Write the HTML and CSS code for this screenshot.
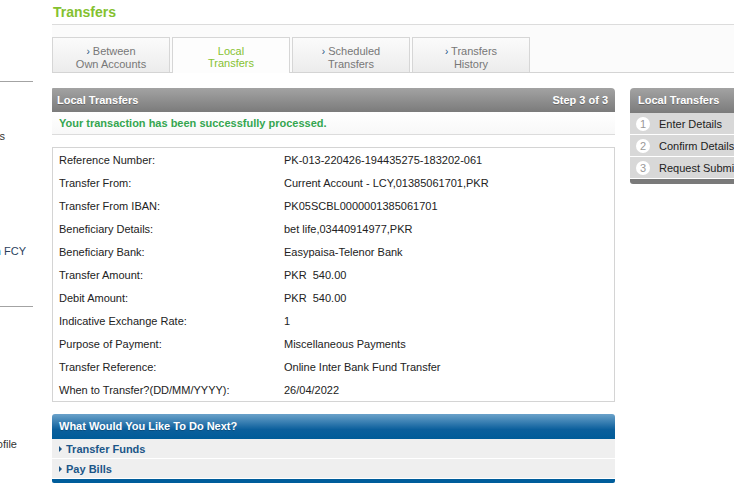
FILE: index.html
```html
<!DOCTYPE html>
<html lang="en">
<head>
<meta charset="utf-8">
<title>Transfers</title>
<link rel="stylesheet" href="styles.css">
</head>
<body>
<div class="page">
  <aside class="sidenav">
    <div class="side-rule rule-a"></div>
    <div class="side-item item-a"><span>My Beneficiaries</span></div>
    <div class="side-item item-b link"><span>Transfer in FCY</span></div>
    <div class="side-rule rule-b"></div>
    <div class="side-item item-c"><span>Update Profile</span></div>
  </aside>

  <main class="main">
    <header class="page-head"><h1>Transfers</h1></header>

    <nav class="tabs">
      <div class="tab"><span class="chev">›</span> Between<br>Own Accounts</div>
      <div class="tab active">Local<br>Transfers</div>
      <div class="tab"><span class="chev">›</span> Scheduled<br>Transfers</div>
      <div class="tab"><span class="chev">›</span> Transfers<br>History</div>
    </nav>

    <div class="content">
      <section class="col">
        <div class="panel-head">
          <span>Local Transfers</span>
          <span>Step 3 of 3</span>
        </div>
        <div class="success">Your transaction has been successfully processed.</div>

        <div class="details">
          <div class="row"><span class="lbl">Reference Number:</span><span class="val">PK-013-220426-194435275-183202-061</span></div>
          <div class="row"><span class="lbl">Transfer From:</span><span class="val">Current Account - LCY,01385061701,PKR</span></div>
          <div class="row"><span class="lbl">Transfer From IBAN:</span><span class="val">PK05SCBL0000001385061701</span></div>
          <div class="row"><span class="lbl">Beneficiary Details:</span><span class="val">bet life,03440914977,PKR</span></div>
          <div class="row"><span class="lbl">Beneficiary Bank:</span><span class="val">Easypaisa-Telenor Bank</span></div>
          <div class="row"><span class="lbl">Transfer Amount:</span><span class="val">PKR&nbsp;&nbsp;540.00</span></div>
          <div class="row"><span class="lbl">Debit Amount:</span><span class="val">PKR&nbsp;&nbsp;540.00</span></div>
          <div class="row"><span class="lbl">Indicative Exchange Rate:</span><span class="val">1</span></div>
          <div class="row"><span class="lbl">Purpose of Payment:</span><span class="val">Miscellaneous Payments</span></div>
          <div class="row"><span class="lbl">Transfer Reference:</span><span class="val">Online Inter Bank Fund Transfer</span></div>
          <div class="row"><span class="lbl">When to Transfer?(DD/MM/YYYY):</span><span class="val">26/04/2022</span></div>
        </div>

        <div class="next">
          <div class="next-head">What Would You Like To Do Next?</div>
          <div class="next-item"><span class="tri"></span>Transfer Funds</div>
          <div class="next-item"><span class="tri"></span>Pay Bills</div>
          <div class="next-foot"></div>
        </div>
      </section>

      <aside class="steps">
        <div class="steps-head">Local Transfers</div>
        <div class="step"><span class="num">1</span>Enter Details</div>
        <div class="step"><span class="num">2</span>Confirm Details</div>
        <div class="step"><span class="num">3</span>Request Submitted</div>
        <div class="steps-foot"></div>
      </aside>
    </div>
  </main>
</div>
</body>
</html>
```
FILE: styles.css
```css
html, body {
  margin: 0;
  padding: 0;
  background: #fff;
  overflow: hidden;
}
body {
  font-family: "Liberation Sans", Arial, sans-serif;
  font-size: 11px;
  color: #222;
  width: 734px;
  height: 495px;
}
.page {
  display: flex;
  align-items: flex-start;
  width: 734px;
}

/* left nav (clipped, as in the reference) */
.sidenav {
  width: 33px;
  flex-shrink: 0;
  margin-right: 19px;
  overflow: hidden;
  display: flex;
  flex-direction: column;
  padding-top: 81px;
}
.side-rule {
  height: 1px;
  background: #a3a3a3;
}
.side-item {
  display: flex;
  justify-content: flex-end;
  white-space: nowrap;
  line-height: 14px;
  height: 14px;
  color: #333;
}
.side-item.link { color: #2b3f5c; }
.item-a { margin-top: 47px; padding-right: 28px; }
.item-b { margin-top: 101px; padding-right: 7px; }
.rule-b { margin-top: 48px; }
.item-c { margin-top: 130px; padding-right: 16px; }

/* main */
.main {
  flex: 1;
  min-width: 0;
}
.page-head {
  border-bottom: 1px solid #dcdcdc;
  padding: 5px 0 4px 1px;
}
.page-head h1 {
  margin: 0;
  font-size: 14px;
  line-height: 15px;
  font-weight: bold;
  color: #84c12f;
}

.tabs {
  display: flex;
  gap: 2px;
  padding-top: 12px;
  background: #fbfbfb;
  border-bottom: 1px solid #d4d4d4;
}
.tab {
  width: 116px;
  height: 27px;
  padding-top: 7px;
  border: 1px solid #d6d6d6;
  border-bottom: none;
  background: linear-gradient(#fbfbfb, #ececec);
  color: #777;
  text-align: center;
  line-height: 12px;
  font-size: 11px;
}
.tab .chev {
  color: #1a5283;
  font-size: 10px;
}
.tab.active {
  background: #fdfdfd;
  color: #86c231;
  margin-bottom: -1px;
  height: 28px;
}

.content {
  display: flex;
  gap: 15px;
  margin-top: 15px;
}
.col {
  width: 563px;
  flex-shrink: 0;
}
.panel-head {
  display: flex;
  justify-content: space-between;
  align-items: center;
  height: 24px;
  padding: 0 7px 0 5px;
  background: linear-gradient(#a3a3a3, #7b7b7b);
  border-radius: 1px 4px 0 0;
  color: #fff;
  font-weight: bold;
  text-shadow: 0 1px 0 rgba(0,0,0,.25);
}
.success {
  height: 22px;
  line-height: 22px;
  padding-left: 7px;
  background: linear-gradient(#fff, #f8f8f8);
  border-bottom: 1px solid #dcdcdc;
  color: #35a650;
  font-weight: bold;
}

.details {
  margin-top: 12px;
  border: 1px solid #d4d4d4;
}
.row {
  display: flex;
  height: 23px;
  align-items: center;
  padding-left: 6px;
}
.lbl { width: 225px; flex-shrink: 0; }

.next {
  margin-top: 12px;
}
.next-head {
  height: 25px;
  line-height: 25px;
  padding-left: 7px;
  background: linear-gradient(#6ba2ca, #0b5f9c 62%, #005c99);
  border-radius: 3px 3px 0 0;
  color: #fff;
  font-weight: bold;
  text-shadow: 0 1px 0 rgba(0,0,0,.2);
}
.next-item {
  display: flex;
  align-items: center;
  height: 19px;
  padding-left: 7px;
  background: #efefef;
  border-bottom: 1px solid #fff;
  color: #1b5688;
  font-weight: bold;
}
.tri {
  width: 0;
  height: 0;
  border-top: 3px solid transparent;
  border-bottom: 3px solid transparent;
  border-left: 3px solid #1b5688;
  margin-right: 4px;
}
.next-foot {
  height: 4px;
  background: #005d9b;
  border-radius: 0 0 2px 2px;
}

/* steps */
.steps {
  width: 160px;
  flex-shrink: 0;
}
.steps-head {
  height: 25px;
  line-height: 25px;
  padding-left: 8px;
  background: linear-gradient(#a3a3a3, #7b7b7b);
  border-radius: 4px 4px 0 0;
  color: #fff;
  font-weight: bold;
  text-shadow: 0 1px 0 rgba(0,0,0,.25);
}
.step {
  display: flex;
  align-items: center;
  height: 21px;
  padding-left: 6px;
  background: #d8d8d8;
  border-bottom: 1px solid #fff;
  color: #222;
}
.num {
  width: 14px;
  height: 14px;
  border-radius: 50%;
  background: #fff;
  color: #999;
  font-size: 11px;
  line-height: 14px;
  text-align: center;
  margin-right: 9px;
}
.steps-foot {
  height: 5px;
  background: #7a7a7a;
  border-radius: 0 0 0 3px;
}
```
